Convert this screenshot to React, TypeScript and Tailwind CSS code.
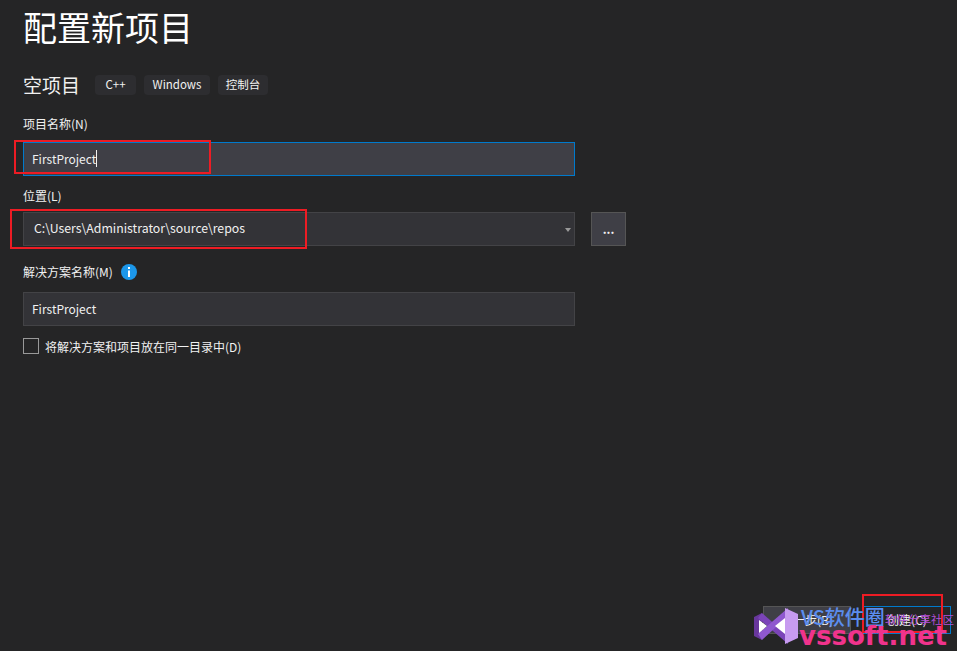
const cjk = { fontFamily: '"Noto Sans CJK SC", "Noto Sans", sans-serif' };

function Tag({ width, children }: { width: string; children: string }) {
  return (
    <span className={`flex h-[20px] items-center justify-center rounded-[4px] bg-[#2d2d30] text-[11.5px] text-[#f1f1f1] ${width}`}>
      {children}
    </span>
  );
}

export default function App() {
  return (
    <main className="relative h-[651px] w-[957px] overflow-hidden bg-[#252526] text-[#f1f1f1]" style={cjk}>
      <div className="flex w-[575px] flex-col pl-[23px]">
        <h1 className="mt-[3px] h-[48px] text-[34px] leading-[48px] text-white">配置新项目</h1>

        <div className="mt-[21px] flex h-[26px] items-center">
          <h2 className="w-[72px] text-[19px] leading-[26px]">空项目</h2>
          <div className="flex gap-[8px]">
            <Tag width="w-[41px]">C++</Tag>
            <Tag width="w-[66px]">Windows</Tag>
            <Tag width="w-[50px]">控制台</Tag>
          </div>
        </div>

        <label className="mt-[17px] h-[18px] text-[12px] leading-[18px]">项目名称(N)</label>
        <div className="mt-[9px] flex h-[34px] items-center border border-[#007acc] bg-[#3f3f46] pb-px pl-[8px] text-[12px]">
          FirstProject
          <span className="h-[17px] w-px bg-[#f1f1f1]" />
        </div>

        <label className="mt-[11px] h-[18px] text-[12px] leading-[18px]">位置(L)</label>
        <div className="mt-[7px] flex items-center">
          <div className="flex h-[34px] w-[552px] shrink-0 items-center justify-between border border-[#434346] bg-[#333337] pl-[10px] pr-[3px] text-[12.3px]">
            <span className="pb-px">C:\Users\Administrator\source\repos</span>
            <svg width="6" height="4" viewBox="0 0 6 4" className="mt-px">
              <path d="M0 0h6L3 4z" fill="#999999" />
            </svg>
          </div>
          <button className="ml-[16px] flex h-[34px] w-[35px] shrink-0 items-center justify-center border border-[#555555] bg-[#3f3f46] text-[12px] font-bold">
            ...
          </button>
        </div>

        <div className="mt-[17px] flex h-[18px] items-center gap-[8px]">
          <label className="text-[12px] leading-[18px]">解决方案名称(M)</label>
          <svg width="16" height="16" viewBox="0 0 16 16">
            <circle cx="8" cy="8" r="8" fill="#1c97ea" />
            <rect x="7" y="3" width="2" height="2" fill="#ffffff" />
            <rect x="7" y="6.5" width="2" height="6.5" fill="#ffffff" />
          </svg>
        </div>
        <div className="mt-[11px] flex h-[34px] items-center border border-[#434346] bg-[#333337] pb-px pl-[8px] text-[12px]">
          FirstProject
        </div>

        <div className="mt-[12px] flex h-[16px] items-center gap-[6px]">
          <span className="h-[16px] w-[16px] border border-[#999999] bg-[#252526]" />
          <span className="pt-[2px] text-[12px] leading-[18px]">将解决方案和项目放在同一目录中(D)</span>
        </div>
      </div>

      <div className="absolute bottom-[17px] right-[6px] flex gap-[12px] text-[12px]">
        <button className="flex h-[28px] w-[88px] items-center justify-center border border-[#555555] bg-[#3f3f46]">
          上一步(B)
        </button>
        <button className="flex h-[28px] w-[88px] items-center justify-center border border-[#007acc] bg-[#252526]">
          创建(C)
        </button>
      </div>

      {/* 标注红框 */}
      <div className="absolute left-[14px] top-[140px] h-[34px] w-[197px] border-2 border-[#ed1c24]" />
      <div className="absolute left-[10px] top-[209px] h-[40px] w-[297px] border-2 border-[#ed1c24]" />
      <div className="absolute left-[862px] top-[594px] h-[39px] w-[81px] border-2 border-[#ed1c24]" />

      {/* 水印 */}
      <svg className="absolute left-[754px] top-[608px]" width="44" height="36" viewBox="0 0 44 36">
        <path d="M0 9 8 5v27l-8-4z" fill="#68379c" />
        <path d="M8 5 34 28v8L4 10z" fill="#7b44b8" />
        <path d="M8 32 34 8V0L4 26z" fill="#8f58cf" />
        <path d="M31 0l13 6v24l-13 6z" fill="#c79bf0" />
        <path d="M5 12l8 6-8 7z" fill="#ffffff" />
        <path d="M31 10v16l-10-8z" fill="#ffffff" />
      </svg>
      <span className="absolute left-[801px] top-[603px] text-[20px] font-medium leading-[28px] text-[#5b8def]">VS软件圈</span>
      <span className="absolute left-[885px] top-[611px] text-[11.5px] leading-[16px] text-[#b44fd8]">软件分享社区</span>
      <span
        className="absolute left-[799px] top-[620px] text-[26px] font-bold leading-[32px] text-[#f0338c]"
        style={{ fontFamily: '"DejaVu Sans", sans-serif' }}
      >
        vssoft.net
      </span>
    </main>
  );
}
